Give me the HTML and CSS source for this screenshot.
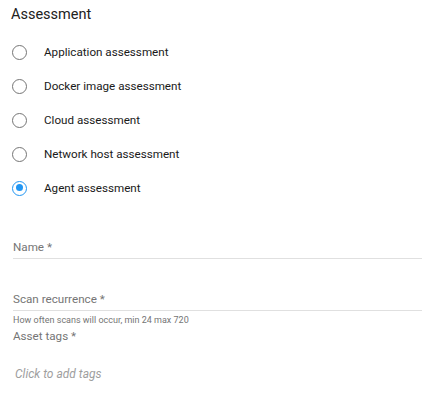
FILE: index.html
```html
<!DOCTYPE html>
<html>
<head>
<meta charset="utf-8">
<link rel="stylesheet" href="styles.css">
</head>
<body>
<div class="form">
  <div class="title">Assessment</div>
  <div class="radios">
    <label class="radio"><span class="dot"></span><span class="rlabel">Application assessment</span></label>
    <label class="radio"><span class="dot"></span><span class="rlabel">Docker image assessment</span></label>
    <label class="radio"><span class="dot"></span><span class="rlabel">Cloud assessment</span></label>
    <label class="radio"><span class="dot"></span><span class="rlabel">Network host assessment</span></label>
    <label class="radio checked"><span class="dot"></span><span class="rlabel">Agent assessment</span></label>
  </div>
  <div class="field first">
    <div class="flabel">Name *</div>
  </div>
  <div class="field second">
    <div class="flabel">Scan recurrence *</div>
  </div>
  <div class="hint">How often scans will occur, min 24 max 720</div>
  <div class="tags-label">Asset tags *</div>
  <div class="tags-placeholder">Click to add tags</div>
</div>
</body>
</html>
```
FILE: styles.css
```css
html, body {
  margin: 0;
  padding: 0;
  background: #ffffff;
}
body {
  font-family: Roboto, "Liberation Sans", sans-serif;
  color: #212121;
}
.form {
  padding: 5px 5px 0 11px;
  display: flex;
  flex-direction: column;
}
.title {
  font-size: 14.5px;
  line-height: 20px;
  color: #212121;
}
.radios {
  display: flex;
  flex-direction: column;
  margin-top: 10px;
}
.radio {
  display: flex;
  align-items: center;
  height: 34px;
}
.dot {
  box-sizing: border-box;
  width: 15px;
  height: 15px;
  border: 1px solid #757575;
  border-radius: 50%;
  margin-left: 1px;
  margin-right: 17px;
  position: relative;
}
.checked .dot {
  border: 1.5px solid #2196f3;
}
.checked .dot::after {
  content: "";
  position: absolute;
  left: 2.5px;
  top: 2.5px;
  width: 7px;
  height: 7px;
  border-radius: 50%;
  background: #2196f3;
}
.rlabel {
  font-size: 11.65px;
  color: #1a1a1a;
}
.field {
  margin-left: 2px;
  border-bottom: 1px solid #e0e0e0;
  height: 24px;
  display: flex;
  align-items: flex-end;
  padding-bottom: 4px;
  box-sizing: border-box;
}
.field.first {
  margin-top: 30px;
}
.field.second {
  margin-top: 28px;
}
.flabel {
  font-size: 11.65px;
  color: #757575;
}
.hint {
  margin-left: 2px;
  font-size: 9px;
  color: #757575;
  margin-top: 4px;
  line-height: 11px;
}
.tags-label {
  margin-left: 2px;
  font-size: 11.65px;
  color: #757575;
  margin-top: 3px;
  line-height: 15px;
}
.tags-placeholder {
  margin-left: 4px;
  font-size: 12px;
  font-style: italic;
  color: #9e9e9e;
  margin-top: 23px;
}
```
